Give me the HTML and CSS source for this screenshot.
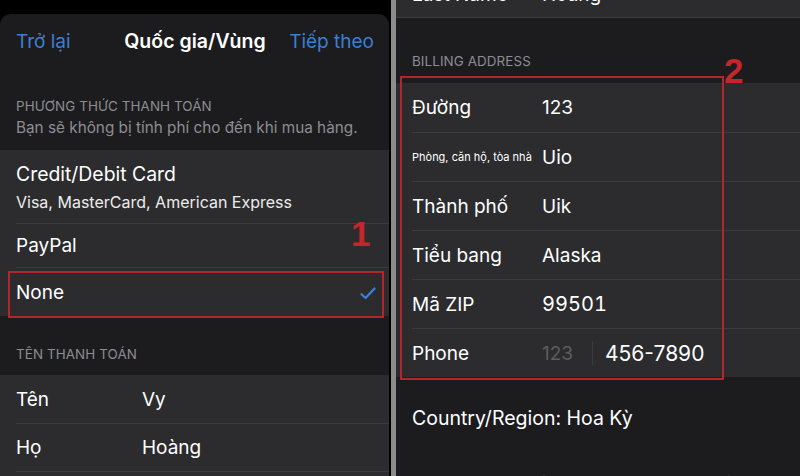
FILE: index.html
```html
<!DOCTYPE html>
<html lang="vi">
<head>
<meta charset="utf-8">
<title>Quốc gia/Vùng</title>
<link rel="stylesheet" href="styles.css">
</head>
<body>
<div class="screen">
  <section class="pane left">
    <div class="topband"></div>
    <div class="sheet">
      <header class="nav">
        <span class="link back">Trở lại</span>
        <span class="title">Quốc gia/Vùng</span>
        <span class="link next">Tiếp theo</span>
      </header>
      <div class="sec-head first">
        <div class="caps">PHƯƠNG THỨC THANH TOÁN</div>
        <div class="note">Bạn sẽ không bị tính phí cho đến khi mua hàng.</div>
      </div>
      <div class="group">
        <div class="row tall">
          <div class="main">Credit/Debit Card</div>
          <div class="sub">Visa, MasterCard, American Express</div>
        </div>
        <div class="row"><span class="main">PayPal</span></div>
        <div class="row sel">
          <span class="main">None</span>
          <svg class="check" width="16" height="13" viewBox="0 0 16 13"><path d="M1.5 7.2 L5.6 11 L14.5 1.5" fill="none" stroke="#3a82dc" stroke-width="2.2" stroke-linecap="round" stroke-linejoin="round"/></svg>
        </div>
      </div>
      <div class="sec-head second">
        <div class="caps">TÊN THANH TOÁN</div>
      </div>
      <div class="group">
        <div class="row field"><span class="lbl">Tên</span><span class="val">Vy</span></div>
        <div class="row field"><span class="lbl">Họ</span><span class="val">Hoàng</span></div>
        <div class="row field"></div>
      </div>
    </div>
  </section>

  <div class="divider"><div class="bar"></div></div>

  <section class="pane right">
    <div class="group cut">
      <div class="row field"><span class="lbl">Last Name</span><span class="val">Hoang</span></div>
    </div>
    <div class="sec-head third">
      <div class="caps">BILLING ADDRESS</div>
    </div>
    <div class="group addr">
      <div class="row field"><span class="lbl">Đường</span><span class="val">123</span></div>
      <div class="row field"><span class="lbl small">Phòng, căn hộ, tòa nhà</span><span class="val">Uio</span></div>
      <div class="row field"><span class="lbl">Thành phố</span><span class="val">Uik</span></div>
      <div class="row field"><span class="lbl">Tiểu bang</span><span class="val">Alaska</span></div>
      <div class="row field"><span class="lbl">Mã ZIP</span><span class="val num">99501</span></div>
      <div class="row field"><span class="lbl">Phone</span><span class="val code">123</span><span class="vsep"></span><span class="phone">456-7890</span></div>
    </div>
    <div class="country">Country/Region: Hoa Kỳ</div>
    <div class="footnote">You can use multiple payment methods with your</div>
  </section>

  <div class="mark box1"></div>
  <div class="mark num1">1</div>
  <div class="mark box2"></div>
  <div class="mark num2">2</div>
</div>
</body>
</html>
```

FILE: styles.css
```css
* { box-sizing: border-box; }
html, body { margin: 0; padding: 0; }
body {
  background: #000;
  font-family: Inter, "Noto Sans", "Liberation Sans", sans-serif;
  color: #fff;
  width: 800px;
  height: 476px;
  overflow: hidden;
}
.screen {
  position: relative;
  display: flex;
  width: 800px;
  height: 476px;
  overflow: hidden;
}
.pane { overflow: hidden; }
.left { width: 389px; flex: none; display: flex; flex-direction: column; }
.topband { height: 14px; background: #000; flex: none; }
.sheet {
  flex: 1;
  background: #1c1c1e;
  border-radius: 11px 11px 0 0;
}
.nav {
  height: 54px;
  display: grid;
  grid-template-columns: 1fr auto 1fr;
  align-items: center;
  padding: 0 15px 0 16px;
  font-size: 19px;
}
.link { color: #3b7fd4; }
.next { justify-self: end; }
.title { font-weight: 600; color: #fff; font-size: 19.5px; }

.sec-head { padding-left: 16px; }
.caps { font-size: 13.4px; line-height: 16px; color: #8d8d92; letter-spacing: 0.1px; }
.note { font-size: 15.3px; line-height: 20px; color: #8d8d92; margin-top: 4px; }
.first { padding-top: 30px; padding-bottom: 12px; }
.second { padding-top: 30px; padding-bottom: 13px; }
.third { padding-top: 35px; padding-bottom: 14px; }

.group { background: #2c2c2e; }
.row {
  margin-left: 16px;
  height: 44px;
  display: flex;
  align-items: center;
  font-size: 19px;
  padding-right: 13px;
}
.row + .row { border-top: 1px solid #3c3c3f; }
.row.tall {
  height: 73px;
  flex-direction: column;
  align-items: flex-start;
  justify-content: flex-start;
  padding-top: 12px;
}
.tall .main { line-height: 24px; font-size: 19.4px; }
.sub { font-size: 16px; line-height: 20px; margin-top: 6px; color: #ececec; }
.row.sel { height: 49px; justify-content: space-between; }
.check { margin-top: 2px; }

.row.field { height: 48px; }
.lbl { width: 126px; flex: none; }
.lbl.small { font-size: 11px; }
.val { color: #fff; }
.num { font-feature-settings: "tnum" 1; font-size: 20px; }

.right { flex: 1; background: #1c1c1e; }
.right .lbl { width: 130px; }
.cut { margin-top: -29px; border-bottom: 1px solid #3c3c3f; }
.cut .row.field { height: 46px; }
.addr .row.field { height: 49px; }
.code { color: #5c5c60; width: 50px; font-size: 19px; }
.vsep { width: 1px; height: 24px; background: #3c3c3f; margin-right: 12px; }
.phone { font-size: 21px; }
.country {
  padding: 29px 0 0 16px;
  font-size: 19.5px;
  line-height: 24px;
}
.footnote {
  padding: 42px 0 0 16px;
  font-size: 16px;
  line-height: 20px;
  color: #8d8d92;
  white-space: nowrap;
}

.divider { width: 7px; flex: none; background: #000; display: flex; justify-content: flex-end; }
.bar { width: 5px; background: #8c8c8c; }

.mark { position: absolute; }
.box1 { left: 8px; top: 271px; width: 376px; height: 47px; border: 2.5px solid #b3262b; }
.box2 { left: 400px; top: 76px; width: 324px; height: 304px; border: 2.5px solid #b3262b; }
.num1, .num2 {
  color: #c4262c;
  font-family: "Liberation Sans", Arial, sans-serif;
  font-weight: bold;
  font-size: 35px;
  line-height: 35px;
}
.num1 { left: 351px; top: 216px; }
.num2 { left: 724px; top: 53px; }
```
